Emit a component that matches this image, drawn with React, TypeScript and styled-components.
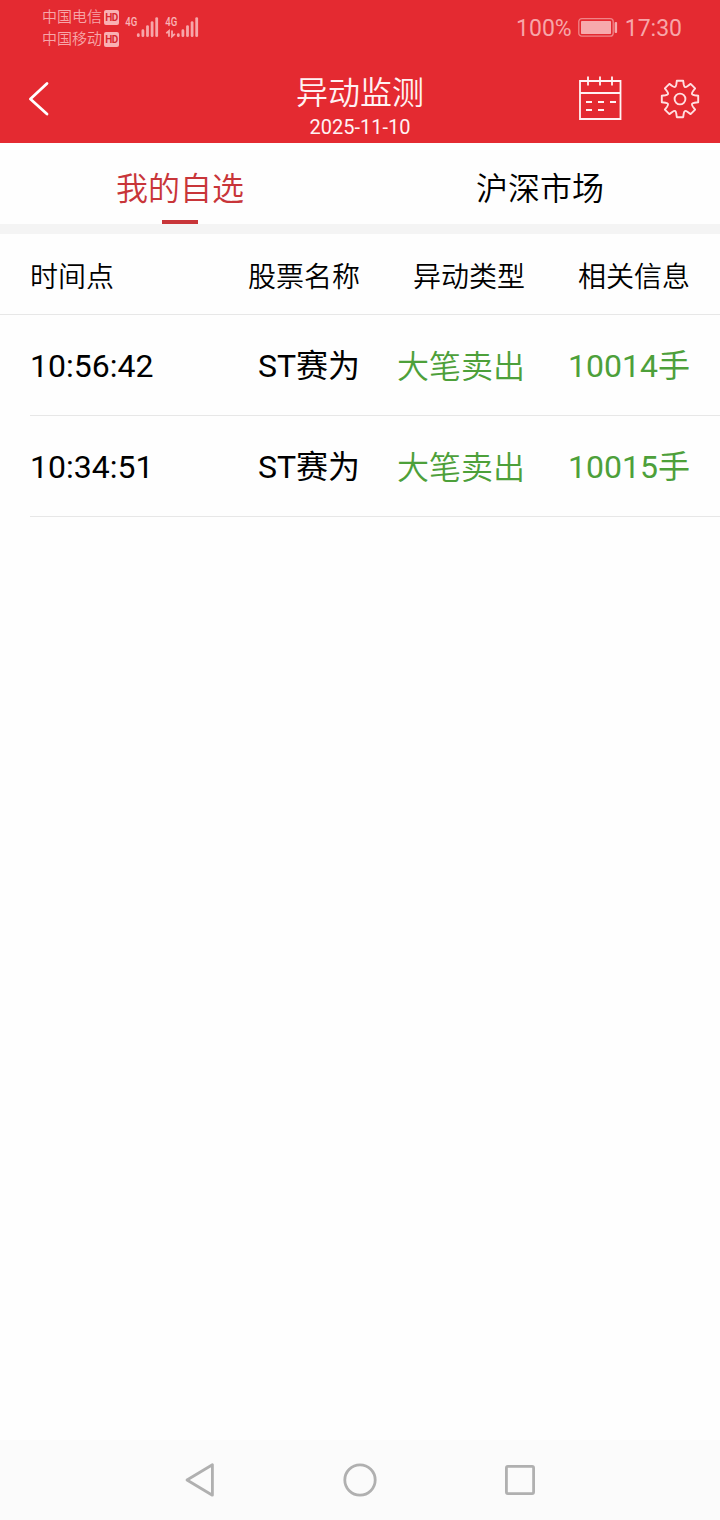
import React from "react";
import styled, { createGlobalStyle } from "styled-components";

const GlobalStyle = createGlobalStyle`
  * { box-sizing: border-box; }
  body {
    margin: 0;
    background: #fefefe;
    color: #000;
    font-family: Roboto, "Noto Sans CJK SC", sans-serif;
  }
`;

const Screen = styled.div`
  display: flex;
  flex-direction: column;
  width: 720px;
  height: 1520px;
  background: #fefefe;
`;

const StatusBar = styled.div`
  display: flex;
  justify-content: space-between;
  height: 56px;
  padding: 6px 38px 0 42px;
  background: #e42a31;
  color: #f7a6a9;
`;

const StatusSide = styled.div`
  display: flex;
`;

const Carriers = styled.div`
  display: flex;
  flex-direction: column;
`;

const Carrier = styled.div`
  display: flex;
  align-items: center;
  gap: 2px;
  height: 22px;
  font-size: 15px;
  font-weight: 350;
  line-height: 22px;
`;

const HdBadge = styled.span`
  width: 15px;
  height: 15px;
  border-radius: 2px;
  background: #f9b0b3;
  color: #d9282f;
  font-size: 10px;
  font-weight: 700;
  line-height: 15px;
  letter-spacing: -0.6px;
  text-align: center;
`;

const Signals = styled.svg`
  margin-left: 5px;
`;

const StatusText = styled.span`
  height: 46px;
  font-size: 23px;
  line-height: 46px;
`;

const Battery = styled.svg`
  margin: 11px 7px 0 6px;
`;

const TitleBar = styled.header`
  display: grid;
  grid-template-columns: 200px 1fr 200px;
  height: 87px;
  background: #e42a31;
  color: #fff2f3;
`;

const BackButton = styled.button`
  display: flex;
  width: 60px;
  padding: 24px 0 0 26px;
  border: 0;
  background: none;
`;

const Heading = styled.div`
  display: flex;
  flex-direction: column;
  align-items: center;
  padding-top: 15px;
`;

const Title = styled.h1`
  margin: 0;
  font-size: 32px;
  font-weight: 350;
  line-height: 44px;
`;

const DateText = styled.div`
  font-size: 20px;
  line-height: 24px;
`;

const Actions = styled.div`
  display: flex;
  justify-content: flex-end;
  gap: 36px;
  padding: 18px 19px 0 0;
`;

const Tabs = styled.nav`
  display: grid;
  grid-template-columns: 1fr 1fr;
  height: 91px;
  border-bottom: 10px solid #f4f4f4;
`;

const Tab = styled.div<{ $active?: boolean }>`
  display: flex;
  flex-direction: column;
  align-items: center;
  justify-content: space-between;
  padding-top: 23px;
  font-size: 32px;
  font-weight: 350;
  line-height: 46px;
  color: ${(p) => (p.$active ? "#c83539" : "#000")};

  &::after {
    content: "";
    width: 36px;
    height: 4px;
    background: ${(p) => (p.$active ? "#c83539" : "transparent")};
  }
`;

const Table = styled.main`
  flex: 1;
`;

const columns = `
  display: grid;
  grid-template-columns: 1fr 165px 165px 165px;
  align-items: center;
  text-align: right;
  white-space: nowrap;
`;

const HeadRow = styled.div`
  ${columns}
  height: 81px;
  padding: 7px 30px 0;
  border-bottom: 1px solid #e7e7e7;
  font-size: 28px;
  font-weight: 350;
  line-height: 40px;
`;

const Row = styled.div`
  ${columns}
  height: 101px;
  margin-left: 30px;
  padding: 2px 30px 0 0;
  border-bottom: 1px solid #e7e7e7;
  font-size: 32px;
  line-height: 46px;
`;

const Cell = styled.span<{ $tone?: "sell"; $left?: boolean; $soft?: boolean }>`
  text-align: ${(p) => (p.$left ? "left" : "right")};
  color: ${(p) => (p.$tone === "sell" ? "#4da03a" : "#000")};
  ${(p) => p.$soft && "font-weight: 350; padding-top: 2px;"}
`;

const NavBar = styled.footer`
  display: flex;
  justify-content: center;
  align-items: center;
  gap: 120px;
  height: 80px;
  background: #fbfbfb;
`;

const rows = [
  { time: "10:56:42", name: "ST赛为", type: "大笔卖出", info: "10014手" },
  { time: "10:34:51", name: "ST赛为", type: "大笔卖出", info: "10015手" },
];

const barTops = [33.3, 29.3, 25.2, 21.2, 17.2];

function SignalBars({ x }: { x: number }) {
  return (
    <g stroke="#f7a6a9" strokeWidth="2.8" strokeLinecap="round">
      {barTops.map((top, i) => (
        <line key={i} x1={x + i * 4.6} x2={x + i * 4.6} y1={top + 1.4} y2={35.7} />
      ))}
    </g>
  );
}

function SignalIcons() {
  const label = {
    fontSize: 12,
    fontWeight: 500,
    fill: "#f9b4b6",
    textLength: 12,
    lengthAdjust: "spacingAndGlyphs",
  } as const;
  return (
    <Signals width="78" height="40" viewBox="124 6 78 40">
      <text x="125.2" y="26" {...label}>4G</text>
      <SignalBars x={138.3} />
      <text x="165.2" y="26" {...label}>4G</text>
      <SignalBars x={178.3} />
      <path
        d="M166.3 33.2 L169 31 V36.8 M172 30.6 V36.4 L174.9 33.8"
        fill="none"
        stroke="#f7a6a9"
        strokeWidth="1.8"
      />
    </Signals>
  );
}

/* One tooth plus the valley that follows it, repeated every 45 degrees. */
function gearPath() {
  const parts: string[] = [];
  for (let i = 0; i < 8; i++) {
    const a = (i * Math.PI) / 4;
    const at = (x: number, y: number) =>
      `${(x * Math.cos(a) - y * Math.sin(a)).toFixed(2)} ${(x * Math.sin(a) + y * Math.cos(a)).toFixed(2)}`;
    parts.push(
      `${i ? "L" : "M"}${at(-3.2, -18.2)} L${at(3.2, -18.2)} L${at(3.7, -14.6)} C${at(4.3, -11.6)} ${at(5.2, -11.2)} ${at(7.71, -12.94)}`
    );
  }
  return parts.join(" ") + "Z";
}

export default function App() {
  return (
    <>
      <GlobalStyle />
      <Screen>
        <StatusBar>
          <StatusSide>
            <Carriers>
              <Carrier>中国电信<HdBadge>HD</HdBadge></Carrier>
              <Carrier>中国移动<HdBadge>HD</HdBadge></Carrier>
            </Carriers>
            <SignalIcons />
          </StatusSide>
          <StatusSide>
            <StatusText>100%</StatusText>
            <Battery width="40" height="21" viewBox="0 0 40 21">
              <rect x="0.8" y="1.6" width="34.4" height="17.6" rx="3" fill="none" stroke="#f08488" strokeWidth="1.3" />
              <rect x="3" y="4" width="30" height="13" rx="0.8" fill="#f7a9ac" />
              <rect x="36.6" y="5" width="2.5" height="11" rx="1" fill="#f7a9ac" />
            </Battery>
            <StatusText>17:30</StatusText>
          </StatusSide>
        </StatusBar>

        <TitleBar>
          <BackButton aria-label="返回">
            <svg width="26" height="38" viewBox="26 80 26 38" fill="none" stroke="#fff" strokeWidth="2.8" strokeLinecap="round" strokeLinejoin="round">
              <path d="M47 83.5 L30.4 99 L47 114" />
            </svg>
          </BackButton>
          <Heading>
            <Title>异动监测</Title>
            <DateText>2025-11-10</DateText>
          </Heading>
          <Actions>
            <svg width="46" height="48" viewBox="577 74 46 48" fill="none" stroke="#fff2f3" strokeWidth="1.8">
              <path d="M580 81 H620.5 V119 H580 Z M580 93 H620.5 M588 76.5 V85.5 M600 76.5 V85.5 M612 76.5 V85.5" />
              <path d="M586 102 H592 M598 102 H604 M610 102 H616 M586 110 H592 M598 110 H604" />
            </svg>
            <svg width="42" height="48" viewBox="-21 -25 42 48" fill="none" stroke="#ffdfe1" strokeWidth="1.9" strokeLinejoin="round">
              <path d={gearPath()} />
              <circle r="5.4" />
            </svg>
          </Actions>
        </TitleBar>

        <Tabs>
          <Tab $active>我的自选</Tab>
          <Tab>沪深市场</Tab>
        </Tabs>

        <Table>
          <HeadRow>
            <Cell $left>时间点</Cell>
            <Cell>股票名称</Cell>
            <Cell>异动类型</Cell>
            <Cell>相关信息</Cell>
          </HeadRow>
          {rows.map((r) => (
            <Row key={r.time}>
              <Cell $left>{r.time}</Cell>
              <Cell>{r.name}</Cell>
              <Cell $tone="sell" $soft>{r.type}</Cell>
              <Cell $tone="sell">{r.info}</Cell>
            </Row>
          ))}
        </Table>

        <NavBar>
          <svg width="40" height="40" viewBox="0 0 40 40" fill="none" stroke="#b0b0b0" strokeWidth="2.8" strokeLinejoin="round">
            <path d="M7 20 L32.4 4.8 V35.2 Z" />
          </svg>
          <svg width="40" height="40" viewBox="0 0 40 40" fill="none" stroke="#b0b0b0" strokeWidth="2.8">
            <circle cx="20" cy="20" r="15.2" />
          </svg>
          <svg width="40" height="40" viewBox="0 0 40 40" fill="none" stroke="#b0b0b0" strokeWidth="2.8">
            <rect x="6.4" y="6.4" width="27.2" height="27.2" rx="1.5" />
          </svg>
        </NavBar>
      </Screen>
    </>
  );
}
